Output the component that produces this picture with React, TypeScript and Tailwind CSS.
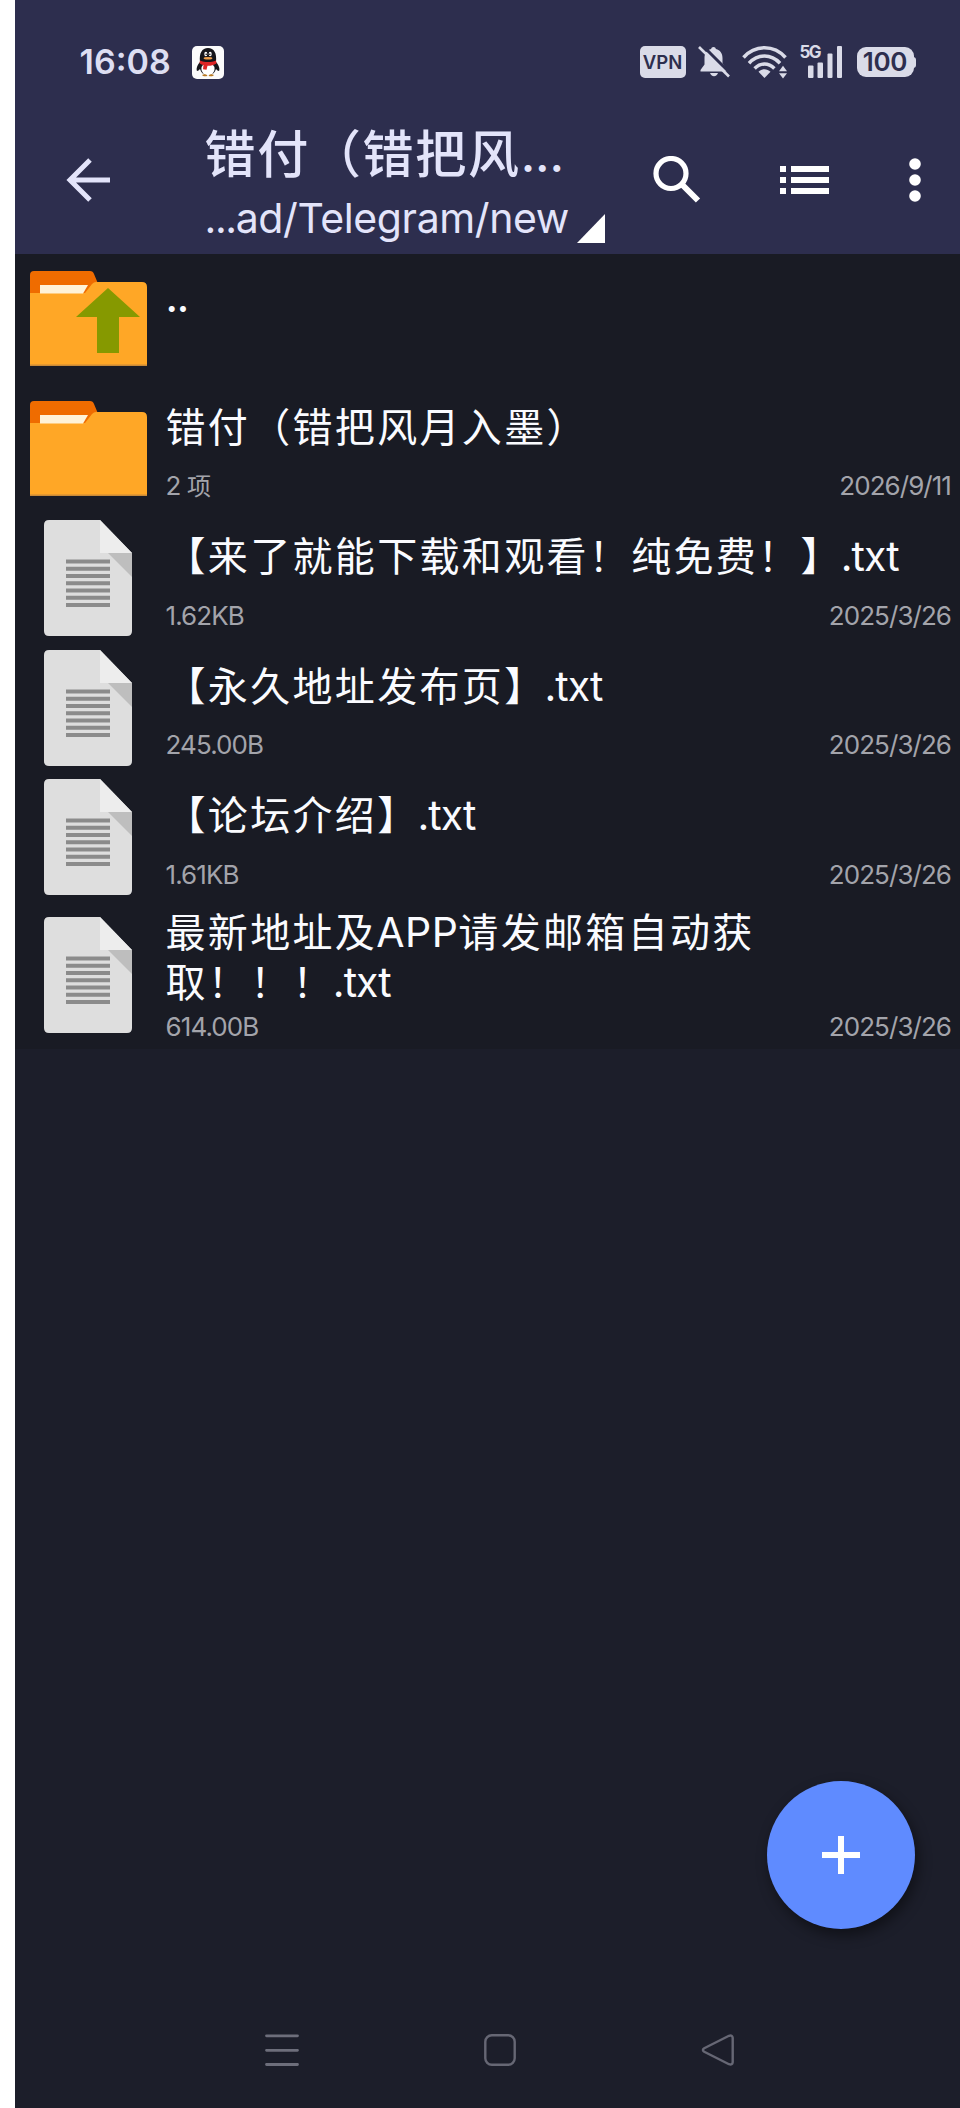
import type { ReactNode } from "react";

function Cjk({ children }: { children: ReactNode }) {
  return <span className="text-[40px] leading-none tracking-[2.330px]">{children}</span>;
}

function Ext() {
  return <span className="-ml-[2px] tracking-[-1px]">.txt</span>;
}

function Penguin() {
  return (
    <svg viewBox="0 0 32 33" className="h-[33px] w-8">
      <rect width="32" height="33" rx="5" fill="#fbfbfb" />
      <path d="M8 16C5 19 4 23 5 25c1 0 2-1 3-2 1 3 3 6 8 6s7-3 8-6c1 1 2 2 3 2 1-2 0-6-3-9 1-9-2-14-8-14S7 7 8 16z" fill="#15151a" />
      <ellipse cx="16" cy="23" rx="6.600" ry="6.400" fill="#fff" />
      <path d="M8 14.500c5 2 11 2 16 0l.5 3c-3 2-7 2.400-9 2.200l-1 4-3.500-.5.5-4.200c-2-.5-3-1-4-1.800z" fill="#dd2425" />
      <ellipse cx="13.800" cy="8" rx="1.500" ry="2.200" fill="#fff" />
      <ellipse cx="18.200" cy="8" rx="1.500" ry="2.200" fill="#fff" />
      <circle cx="14.200" cy="8.300" r=".8" fill="#111" />
      <circle cx="17.800" cy="8.300" r=".8" fill="#111" />
      <ellipse cx="16" cy="12.200" rx="4.400" ry="1.300" fill="#f0a04b" />
      <path d="M10 29c2-1 4-1 5.500 .4-1 1.200-4.500 1.200-5.500-.4zM22 29c-2-1-4-1-5.500 .4 1 1.200 4.500 1.200 5.500-.4z" fill="#b9791f" />
    </svg>
  );
}

function BellOff() {
  return (
    <svg viewBox="0 0 32 32" className="h-8 w-8" fill="#dadbe8">
      <path d="M15.500 1c1.300 0 2.200.8 2.400 2 4.400 1 6.600 4.500 6.600 9v5.500L28.500 23v2.500h-26V24L6.500 18.500V12c0-4.500 2.200-8 6.600-9 .2-1.200 1.100-2 2.400-2z" />
      <path d="M12 27h8c-.6 2-2 3.200-4 3.200S12.600 29 12 27z" />
      <path d="M3.500-1.500l30 30" stroke="#2d2e4e" strokeWidth="3" />
      <path d="M1 1l30 29.500" stroke="#dadbe8" strokeWidth="2.600" />
    </svg>
  );
}

function Wifi() {
  return (
    <svg viewBox="0 0 46 34" className="h-[34px] w-[46px]" fill="none" stroke="#dadbe8" strokeWidth="3.500">
      <path d="M1.500 12.500C13-.5 32-.5 43.500 12.500" />
      <path d="M7 18.200c9-9.500 22-9.500 31 0" />
      <path d="M12.600 23.600c6-6 13.800-6 19.800 0" />
      <path d="M16.500 26.800c3.500-3.400 8.500-3.400 12 0L22.500 33z" fill="#dadbe8" stroke="none" />
      <path d="M37 26.200l4-5.400 4 5.400zM37 28.200h8l-4 5.400z" fill="#dadbe8" stroke="none" />
    </svg>
  );
}

function Signal() {
  return (
    <div className="relative h-[34px] w-[43px]">
      <span className="absolute -top-px left-0 font-['Inter',sans-serif] text-[17px] leading-[17px] font-bold tracking-[-1.500px] text-[#dadbe8]">5G</span>
      <svg viewBox="0 0 43 34" className="h-[34px] w-[43px]" fill="#dadbe8">
        <rect x="8" y="20.500" width="5.500" height="12.500" rx="1" />
        <rect x="17.500" y="17.500" width="5.500" height="15.500" rx="1" />
        <rect x="27.500" y="8.500" width="5" height="24.500" rx="1" />
        <rect x="37" y="1" width="5" height="32" rx="1" />
      </svg>
    </div>
  );
}

function StatusBar() {
  return (
    <div className="flex h-[124px] items-center pr-[44.500px] pl-[65px]">
      <span className="w-[112px] font-['Inter',sans-serif] text-[34px] leading-none font-semibold text-[#dddef2]">16:08</span>
      <Penguin />
      <div className="ml-auto flex items-center">
        <span className="flex h-8 w-[46px] items-center justify-center rounded-[5px] bg-[#dadbe8] font-['Inter',sans-serif] text-[18.500px] leading-none font-semibold text-[#2d2e4e]">VPN</span>
        <div className="ml-3"><BellOff /></div>
        <div className="ml-3"><Wifi /></div>
        <div className="ml-[12px]"><Signal /></div>
        <div className="ml-[14px] flex items-center">
          <span className="flex h-[30px] w-[57px] items-center justify-center rounded-[9px] bg-[#dadbe8] font-['Inter',sans-serif] text-[26px] leading-none font-semibold tracking-[-0.300px] text-[#2d2e4e]">100</span>
          <span className="-ml-px h-[11px] w-[3px] rounded-r-full bg-[#dadbe8]" />
        </div>
      </div>
    </div>
  );
}

function AppBar() {
  return (
    <div className="flex h-[130px]">
      <svg viewBox="0 0 46 46" className="mt-[33px] ml-[51px] h-[46px] w-[46px]" fill="none" stroke="#e3e4fa" strokeWidth="5">
        <path d="M44 23H5M24 3L4 23l20 20" />
      </svg>
      <div className="ml-[93px] flex w-[370px] flex-col text-[#e3e4fa]">
        <div className="flex h-[68px] pt-px font-['Inter','Noto_Sans_CJK_SC',sans-serif] text-[51px] leading-[60px] font-medium whitespace-nowrap [text-spacing-trim:space-all]">
          <span className="tracking-[1.700px]">错付（错把风</span>
          <span className="text-[48px] tracking-[-0.200px]">...</span>
        </div>
        <div className="-mt-1 font-['Inter',sans-serif] text-[41px] leading-[60px] tracking-[-0.400px] whitespace-nowrap">
          <span className="tracking-[-1.400px]">...</span>ad/Telegram/new
        </div>
      </div>
      <svg viewBox="0 0 28 29" className="mt-[90px] ml-[2px] h-[29px] w-7" fill="#ffffff">
        <path d="M28 0v29H0z" />
      </svg>
      <svg viewBox="0 0 48 47" className="mt-8 ml-12 h-[47px] w-12" fill="none" stroke="#ffffff">
        <circle cx="18" cy="17.500" r="15" strokeWidth="5.200" />
        <path d="M29.500 29L45 44.500" strokeWidth="6" />
      </svg>
      <svg viewBox="0 0 49 28" className="mt-[42px] ml-[79px] h-7 w-[49px]" fill="#ffffff">
        <path d="M0 0h6v6H0zM0 11h6v6H0zM0 22h6v6H0zM11 0h38v6H11zM11 11h38v6H11zM11 22h38v6H11z" />
      </svg>
      <svg viewBox="0 0 12 46" className="mt-[33px] ml-[80px] h-[46px] w-3" fill="#ffffff">
        <circle cx="6" cy="7" r="5.800" />
        <circle cx="6" cy="23" r="5.800" />
        <circle cx="6" cy="39" r="5.800" />
      </svg>
    </div>
  );
}

function FolderIcon({ up }: { up?: boolean }) {
  return (
    <svg viewBox="0 0 117 95" className="h-[95px] w-[117px]">
      <path d="M0 30V4q0-4 4-4h56q3 0 4 3l5 12v15z" fill="#ef6c00" />
      <path d="M0 22h55l7-9q2-2 4-2h46q5 0 5 5v79H0z" fill="#ffa726" />
      <path d="M10 14h48l-5 8.500H10z" fill="#fff3d8" />
      <path d="M0 93.500h117V95H0z" fill="#c98a38" />
      {up && <path d="M78 17l32 29H89v36H67V46H46z" fill="#869900" />}
    </svg>
  );
}

function DocIcon() {
  return (
    <svg viewBox="0 0 88 116" className="h-[116px] w-[88px]">
      <path d="M5 0h51l32 33v78q0 5-5 5H5q-5 0-5-5V5q0-5 5-5z" fill="#dedede" />
      <path d="M56 0l32 33H56z" fill="#ededed" />
      <path d="M64 33h24v24z" fill="#bebebe" />
      <path d="M22 41.500h44M22 48.750h44M22 56h44M22 63.250h44M22 70.500h44M22 77.750h44M22 85h44" stroke="#8b8b8b" strokeWidth="4" />
    </svg>
  );
}

type Row = { icon: "up" | "folder" | "doc"; name: ReactNode; size?: ReactNode; date?: string; tall?: boolean };

const rows: Row[] = [
  { icon: "up", name: <span className="font-medium tracking-[-1.200px]">..</span> },
  {
    icon: "folder",
    name: <Cjk>错付（错把风月入墨）</Cjk>,
    size: <>2 <span className="text-[24px] leading-none">项</span></>,
    date: "2026/9/11",
  },
  { icon: "doc", name: <><Cjk>【来了就能下载和观看！纯免费！】</Cjk><Ext /></>, size: "1.62KB", date: "2025/3/26" },
  { icon: "doc", name: <><Cjk>【永久地址发布页】</Cjk><Ext /></>, size: "245.00B", date: "2025/3/26" },
  { icon: "doc", name: <><Cjk>【论坛介绍】</Cjk><Ext /></>, size: "1.61KB", date: "2025/3/26" },
  {
    icon: "doc",
    name: <><Cjk>最新地址及</Cjk><span className="-ml-px tracking-[0.500px]">APP</span><Cjk>请发邮箱自动获</Cjk><br /><Cjk>取！！！</Cjk><Ext /></>,
    size: "614.00B",
    date: "2025/3/26",
    tall: true,
  },
];

function FileRow({ row }: { row: Row }) {
  return (
    <li className={row.tall ? "flex h-[147px]" : "flex h-[129.600px]"}>
      <div className="flex w-[147px] shrink-0 items-center justify-center">
        {row.icon === "doc" ? <DocIcon /> : <FolderIcon up={row.icon === "up"} />}
      </div>
      <div className={row.tall ? "flex flex-1 flex-col pt-[6.500px] pl-[4px]" : "flex flex-1 flex-col pt-[19px] pl-[4px]"}>
        <div className="text-[41px] leading-[49.500px] tracking-[-0.500px] whitespace-nowrap text-[#fafbff]">{row.name}</div>
        <div className={row.tall ? "mt-[4.500px] flex justify-between pr-[9px]" : "mt-[19px] flex justify-between pr-[9px]"}>
          <span className="text-[26px] leading-[30px] tracking-[-0.900px] text-[#a3a4ab]">{row.size}</span>
          <span className="text-[26px] leading-[30px] tracking-[-0.950px] text-[#a3a4ab]">{row.date}</span>
        </div>
      </div>
    </li>
  );
}

export default function App() {
  return (
    <div className="h-[2108px] w-[960px] bg-white pl-[14.500px]">
      <div className="flex h-full flex-col bg-[#1c1e2a]">
        <header className="h-[254px] shrink-0 bg-[#2d2e4e]">
          <StatusBar />
          <AppBar />
        </header>
        <ul className="bg-[#191b24] font-['Inter','Noto_Sans_CJK_SC',sans-serif] font-normal [text-spacing-trim:space-all]">
          {rows.map((row, i) => (
            <FileRow key={i} row={row} />
          ))}
        </ul>
        <div className="mt-auto mr-[45px] mb-[56px] flex h-[148px] w-[148px] items-center justify-center self-end rounded-full bg-[#5f8bff] shadow-[3px_6px_14px_rgba(0,0,0,0.45)]">
          <svg viewBox="0 0 38 38" className="h-[38px] w-[38px]" fill="#ffffff">
            <path d="M16 0h6v16h16v6H22v16h-6V22H0v-6h16z" />
          </svg>
        </div>
        <nav className="flex h-[123px] items-start pt-[49px]">
          <svg viewBox="0 0 34 32" className="ml-[250px] h-8 w-[34px]" stroke="#6d6e7b" strokeWidth="2.800">
            <path d="M1.500 1.800h31M1.500 16.300h31M1.500 30.500h31" strokeLinecap="round" />
          </svg>
          <svg viewBox="0 0 32 32" className="ml-[185.500px] h-8 w-8" fill="none" stroke="#666774" strokeWidth="2.400">
            <rect x="1.300" y="1.300" width="29.400" height="29.400" rx="6.500" />
          </svg>
          <svg viewBox="0 0 34 32" className="ml-[185px] h-8 w-[34px]" fill="none" stroke="#666774" strokeWidth="2.400">
            <path d="M28 1.800L3.200 14.300q-2.600 1.700 0 3.400L28 30.200q3.400 1.200 3.700-2V3.800q-.3-3.200-3.700-2z" strokeLinejoin="round" />
          </svg>
        </nav>
      </div>
    </div>
  );
}
